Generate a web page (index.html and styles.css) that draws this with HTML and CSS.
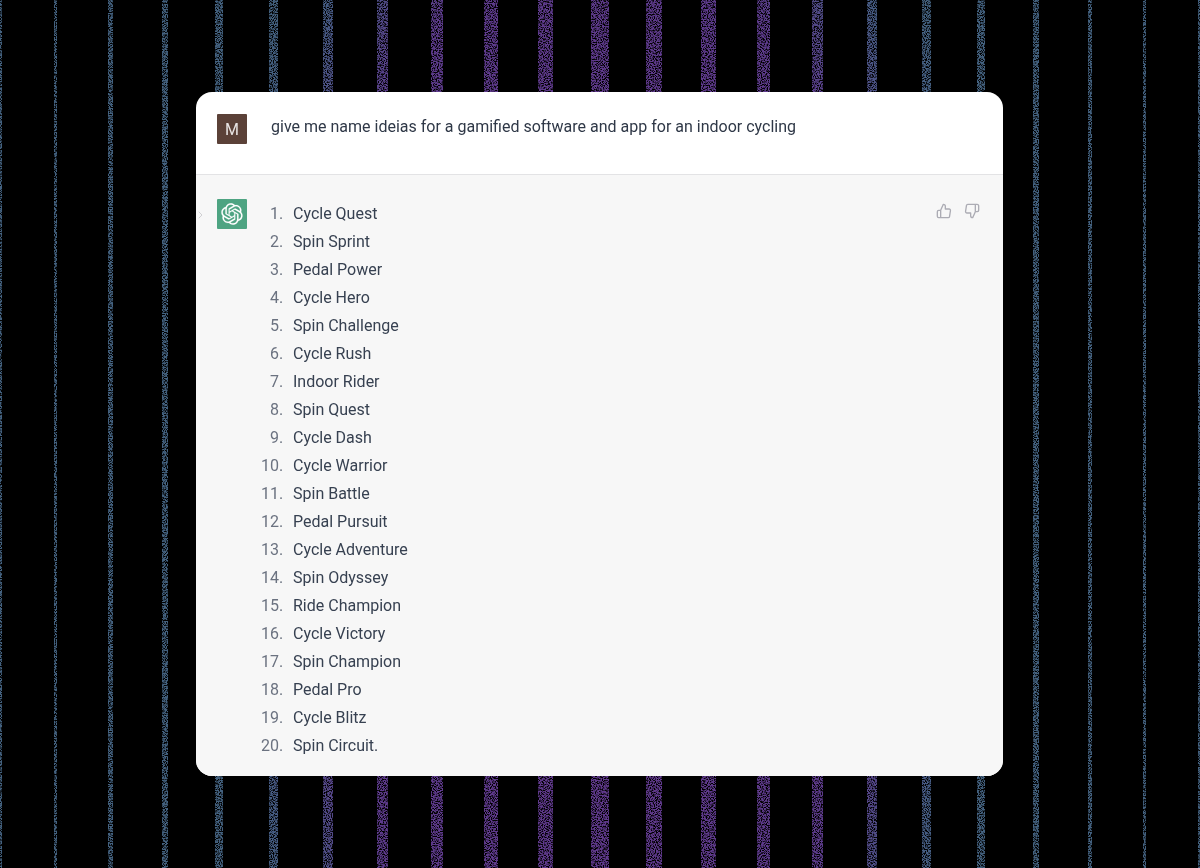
FILE: index.html
```html
<!DOCTYPE html>
<html lang="en">
<head>
<meta charset="utf-8">
<meta name="viewport" content="width=device-width, initial-scale=1">
<title>Name ideas</title>
<link rel="stylesheet" href="styles.css">
</head>
<body>
<svg class="backdrop" viewBox="0 0 1200 868" preserveAspectRatio="none" aria-hidden="true">
  <defs>
    <radialGradient id="glow" gradientUnits="userSpaceOnUse" cx="0" cy="0" r="1" gradientTransform="translate(600 490) scale(400 820)">
      <stop offset="0" stop-color="#63368c"/>
      <stop offset="0.7" stop-color="#5d3b8c"/>
      <stop offset="0.9" stop-color="#465c84"/>
      <stop offset="1" stop-color="#43617f"/>
    </radialGradient>
    <filter id="grain" filterUnits="userSpaceOnUse" x="0" y="0" width="1200" height="868" color-interpolation-filters="sRGB">
      <feTurbulence type="fractalNoise" baseFrequency="0.83" numOctaves="2" seed="7" result="noise"/>
      <feColorMatrix in="noise" type="matrix" values="0 0 0 0 0  0 0 0 0 0  0 0 0 0 0  5 0 0 0 -1.8" result="dots"/>
      <feComposite in="SourceGraphic" in2="dots" operator="in"/>
    </filter>
  </defs>
  <g filter="url(#grain)">
    <path fill="url(#glow)" d="M0 0h2v868h-2zM54 0h3v868h-3zM108 0h5v868h-5zM162 0h6v868h-6zM215 0h8v868h-8zM269 0h9v868h-9zM323 0h10v868h-10zM377 0h11v868h-11zM431 0h12v868h-12zM484 0h14v868h-14zM538 0h15v868h-15zM591 0h18v868h-18zM646 0h16v868h-16zM701 0h15v868h-15zM757 0h13v868h-13zM812 0h11v868h-11zM867 0h10v868h-10zM922 0h9v868h-9zM977 0h8v868h-8zM1033 0h6v868h-6zM1088 0h4v868h-4zM1143 0h3v868h-3zM1198 0h2v868h-2z"/>
  </g>
</svg>

<main class="page">
  <div class="chat">
    <section class="message message-user">
      <span class="avatar avatar-user">M</span>
      <p class="prompt">give me name ideias for a gamified software and app for an indoor cycling</p>
    </section>
    <section class="message message-answer">
      <button class="expand" type="button" aria-label="Expand">
        <svg viewBox="0 0 6 10" width="6" height="10"><path d="M1 2L4 5L1 8"/></svg>
      </button>
      <span class="avatar avatar-bot">
        <svg viewBox="0 0 41 41" width="22" height="22" fill="currentColor" stroke="currentColor" stroke-width="0.3" aria-hidden="true"><path d="M37.5324 16.8707C37.9808 15.5241 38.1363 14.0974 37.9886 12.6859C37.8409 11.2744 37.3934 9.91076 36.676 8.68622C35.6126 6.83404 33.9882 5.3676 32.0373 4.4985C30.0864 3.62941 27.9098 3.40259 25.8215 3.85078C24.8796 2.7893 23.7219 1.94125 22.4257 1.36341C21.1295 0.785575 19.7249 0.491269 18.3058 0.500197C16.1708 0.495044 14.0893 1.16803 12.3614 2.42214C10.6335 3.67624 9.34853 5.44666 8.6917 7.47815C7.30085 7.76286 5.98686 8.3414 4.8377 9.17505C3.68854 10.0087 2.73073 11.0782 2.02839 12.312C0.956464 14.1591 0.498905 16.2988 0.721698 18.4228C0.944492 20.5467 1.83612 22.5449 3.268 24.1293C2.81966 25.4759 2.66413 26.9026 2.81182 28.3141C2.95951 29.7256 3.40701 31.0892 4.12437 32.3138C5.18791 34.1659 6.8123 35.6322 8.76321 36.5013C10.7141 37.3704 12.8907 37.5973 14.9789 37.1492C15.9208 38.2107 17.0786 39.0587 18.3747 39.6366C19.6709 40.2144 21.0755 40.5087 22.4946 40.4998C24.6307 40.5054 26.7133 39.8321 28.4418 38.5772C30.1704 37.3223 31.4556 35.5506 32.1119 33.5179C33.5027 33.2332 34.8167 32.6547 35.9659 31.821C37.115 30.9874 38.0728 29.9178 38.7752 28.684C39.8458 26.8371 40.3023 24.6979 40.0789 22.5748C39.8556 20.4517 38.9639 18.4544 37.5324 16.8707ZM22.4978 37.8849C20.7443 37.8874 19.0459 37.2733 17.6994 36.1501C17.7601 36.117 17.8666 36.0586 17.936 36.0161L25.9004 31.4156C26.1003 31.3019 26.2663 31.137 26.3813 30.9378C26.4964 30.7386 26.5563 30.5124 26.5549 30.2825V19.0542L29.9213 20.998C29.9389 21.0068 29.9541 21.0198 29.9656 21.0359C29.977 21.052 29.9842 21.0707 29.9867 21.0902V30.3889C29.9842 32.375 29.1946 34.2791 27.7909 35.6841C26.3872 37.0892 24.4838 37.8806 22.4978 37.8849ZM6.39227 31.0064C5.51397 29.4888 5.19742 27.7107 5.49804 25.9832C5.55718 26.0187 5.66048 26.0818 5.73461 26.1244L13.699 30.7248C13.8975 30.8408 14.1233 30.902 14.3532 30.902C14.583 30.902 14.8088 30.8408 15.0073 30.7248L24.731 25.1103V28.9979C24.7321 29.0177 24.7283 29.0376 24.7199 29.0556C24.7115 29.0736 24.6988 29.0893 24.6829 29.1012L16.6317 33.7497C14.9096 34.7416 12.8643 35.0097 10.9447 34.4954C9.02506 33.9811 7.38785 32.7263 6.39227 31.0064ZM4.29707 13.6194C5.17156 12.0998 6.55279 10.9364 8.19885 10.3327C8.19885 10.4013 8.19491 10.5228 8.19491 10.6071V19.808C8.19351 20.0378 8.25334 20.2638 8.36823 20.4629C8.48312 20.6619 8.64893 20.8267 8.84863 20.9404L18.5723 26.5542L15.206 28.4979C15.1894 28.5089 15.1703 28.5155 15.1505 28.5173C15.1307 28.5191 15.1107 28.516 15.0924 28.5082L7.04046 23.8557C5.32135 22.8601 4.06716 21.2235 3.55289 19.3046C3.03862 17.3858 3.30624 15.3413 4.29707 13.6194ZM31.955 20.0556L22.2312 14.4411L25.5976 12.4981C25.6142 12.4872 25.6333 12.4805 25.6531 12.4787C25.6729 12.4769 25.6928 12.4801 25.7111 12.4879L33.7631 17.1364C34.9967 17.849 36.0017 18.8982 36.6606 20.1613C37.3194 21.4244 37.6047 22.849 37.4832 24.2684C37.3617 25.6878 36.8382 27.0432 35.9743 28.1759C35.1103 29.3086 33.9415 30.1717 32.6047 30.6641C32.6047 30.5947 32.6047 30.4733 32.6047 30.3889V21.188C32.6066 20.9586 32.5474 20.7328 32.4332 20.5338C32.319 20.3348 32.154 20.1698 31.955 20.0556ZM35.3055 15.0128C35.2464 14.9765 35.1431 14.9142 35.069 14.8717L27.1045 10.2712C26.906 10.1554 26.6803 10.0943 26.4504 10.0943C26.2206 10.0943 25.9948 10.1554 25.7963 10.2712L16.0726 15.8858V11.9982C16.0715 11.9783 16.0753 11.9585 16.0837 11.9405C16.0921 11.9225 16.1048 11.9068 16.1207 11.8949L24.1719 7.25025C25.4053 6.53903 26.8158 6.19376 28.2383 6.25482C29.6608 6.31589 31.0364 6.78077 32.2044 7.59508C33.3723 8.40939 34.2842 9.53945 34.8334 10.8531C35.3826 12.1667 35.5464 13.6095 35.3055 15.0128ZM14.2424 21.9419L10.8752 19.9981C10.8576 19.9893 10.8423 19.9763 10.8309 19.9602C10.8195 19.9441 10.8122 19.9254 10.8098 19.9058V10.6071C10.8107 9.18295 11.2173 7.78848 11.9819 6.58696C12.7466 5.38544 13.8377 4.42659 15.1275 3.82264C16.4173 3.21869 17.8524 2.99464 19.2649 3.1767C20.6775 3.35876 22.0089 3.93941 23.1034 4.85067C23.0427 4.88379 22.937 4.94215 22.8668 4.98473L14.9024 9.58517C14.7025 9.69878 14.5366 9.86356 14.4215 10.0626C14.3065 10.2616 14.2466 10.4877 14.2479 10.7175L14.2424 21.9419ZM16.071 17.9991L20.4018 15.4978L24.7325 17.9975V22.9985L20.4018 25.4983L16.071 22.9985V17.9991Z"/></svg>
      </span>
      <ol class="ideas">
        <li>Cycle Quest</li>
        <li>Spin Sprint</li>
        <li>Pedal Power</li>
        <li>Cycle Hero</li>
        <li>Spin Challenge</li>
        <li>Cycle Rush</li>
        <li>Indoor Rider</li>
        <li>Spin Quest</li>
        <li>Cycle Dash</li>
        <li>Cycle Warrior</li>
        <li>Spin Battle</li>
        <li>Pedal Pursuit</li>
        <li>Cycle Adventure</li>
        <li>Spin Odyssey</li>
        <li>Ride Champion</li>
        <li>Cycle Victory</li>
        <li>Spin Champion</li>
        <li>Pedal Pro</li>
        <li>Cycle Blitz</li>
        <li>Spin Circuit.</li>
      </ol>
      <div class="feedback">
        <button type="button" aria-label="Good response">
          <svg viewBox="0 0 24 24" width="16" height="16"><path d="M14 9V5a3 3 0 0 0-3-3l-4 9v11h11.280a2 2 0 0 0 2-1.700l1.380-9a2 2 0 0 0-2-2.300zM7 22H4a2 2 0 0 1-2-2v-7a2 2 0 0 1 2-2h3"/></svg>
        </button>
        <button type="button" aria-label="Bad response">
          <svg viewBox="0 0 24 24" width="16" height="16"><path d="M10 15v4a3 3 0 0 0 3 3l4-9V2H5.720a2 2 0 0 0-2 1.700l-1.380 9a2 2 0 0 0 2 2.300zm7-13h2.670A2.310 2.310 0 0 1 22 4v7a2.310 2.310 0 0 1-2.330 2H17"/></svg>
        </button>
      </div>
    </section>
  </div>
</main>
</body>
</html>
```
FILE: styles.css
```css
* {
  box-sizing: border-box;
}

body {
  margin: 0;
  background: #000;
  font-family: Roboto, "Liberation Sans", sans-serif;
  font-size: 16px;
  line-height: 28px;
  color: #374151;
}

button {
  display: block;
  padding: 0;
  border: 0;
  background: none;
  color: inherit;
  cursor: pointer;
}

svg {
  display: block;
}

.backdrop {
  position: fixed;
  inset: 0;
  z-index: -1;
  width: 100%;
  height: 100%;
}

.page {
  display: grid;
  align-items: center;
  min-height: 100vh;
  padding: 92px 197px 92px 196px;
}

.chat {
  overflow: hidden;
  border-radius: 16px;
  background: #fff;
}

.message {
  display: flex;
  align-items: flex-start;
  gap: 24px;
}

.message-user {
  padding: 21px 23px 30px 21px;
  border-bottom: 1px solid #e3e3e5;
}

.message-answer {
  position: relative;
  padding: 24px 23px 16px 21px;
  background: #f7f7f7;
}

.avatar {
  display: grid;
  flex: none;
  place-items: center;
  width: 30px;
  height: 30px;
  border-radius: 1px;
  color: #fff;
}

.avatar-user {
  margin-top: 1px;
  padding-top: 2px;
  background: #5b4138;
  color: #e8e4e3;
}

.avatar-bot {
  background: #4ea482;
}

.prompt {
  flex: 1;
  margin: 0;
  color: #2f3847;
}

.ideas {
  flex: 1;
  margin: 0;
  padding: 1px 0 0 22px;
}

.ideas li::marker {
  content: counter(list-item) ".\2002\200A";
  color: #6b7280;
}

.expand {
  position: absolute;
  top: 35px;
  left: 2px;
}

.expand svg,
.feedback svg {
  fill: none;
  stroke: currentColor;
  stroke-linecap: round;
  stroke-linejoin: round;
}

.expand svg {
  stroke-width: 1;
  color: #d0d0d3;
}

.feedback {
  display: flex;
  gap: 12px;
  padding-top: 4px;
  color: #acacb4;
}

.feedback svg {
  stroke-width: 2;
}
```
